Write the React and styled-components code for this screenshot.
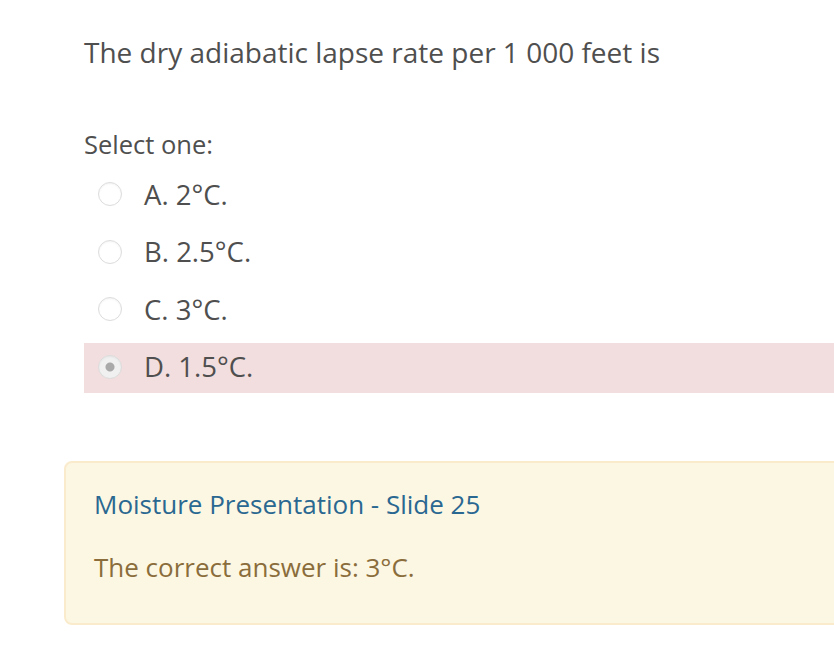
import styled, { createGlobalStyle } from "styled-components";

const GlobalStyle = createGlobalStyle`
  html, body {
    margin: 0;
    padding: 0;
    background: #fff;
    overflow: hidden;
  }
  body {
    font-family: "Open Sans", "Noto Sans", sans-serif;
    color: #4f4f4f;
  }
`;

const options = [
  { letter: "A", text: "2°C." },
  { letter: "B", text: "2.5°C." },
  { letter: "C", text: "3°C." },
  { letter: "D", text: "1.5°C.", checked: true, incorrect: true },
];

export default function App() {
  return (
    <>
      <GlobalStyle />
      <Page>
        <QuestionText>The dry adiabatic lapse rate per 1 000 feet is</QuestionText>
        <Prompt>Select one:</Prompt>
        <Answers>
          {options.map((o) => (
            <AnswerRow key={o.letter} $incorrect={o.incorrect}>
              <Radio $checked={o.checked} />
              <AnswerLabel>
                {o.letter}. {o.text}
              </AnswerLabel>
            </AnswerRow>
          ))}
        </Answers>
        <Feedback>
          <FeedbackLink>Moisture Presentation - Slide 25</FeedbackLink>
          <RightAnswer>The correct answer is: 3°C.</RightAnswer>
        </Feedback>
      </Page>
    </>
  );
}

const Page = styled.div`
  width: 900px;
  padding: 30px 0 0 84px;
`;

const QuestionText = styled.div`
  font-size: 28px;
  line-height: 44px;
  margin: 0 0 54px 0;
`;

const Prompt = styled.div`
  font-size: 25.5px;
  line-height: 32px;
  margin-bottom: 10px;
`;

const Answers = styled.div`
  display: flex;
  flex-direction: column;
  gap: 7.5px;
  margin-top: 1px;
`;

const AnswerRow = styled.div`
  display: flex;
  align-items: center;
  height: 50px;
  padding-left: 14px;
  padding-bottom: 2px;
  box-sizing: border-box;
  background: ${(p) => (p.$incorrect ? "#f2dede" : "transparent")};
`;

const Radio = styled.span`
  width: 22px;
  height: 22px;
  border-radius: 50%;
  border: 1px solid #dcdcdc;
  background: ${(p) =>
    p.$checked
      ? "radial-gradient(circle, #a9a9a9 0 4px, #f0f0f0 5px)"
      : "#fff"};
  box-shadow: inset 0 1px 2px rgba(0, 0, 0, 0.05);
  flex-shrink: 0;
`;

const AnswerLabel = styled.span`
  font-size: 27.5px;
  margin-left: 22px;
`;

const Feedback = styled.div`
  margin: 68px 0 0 -20px;
  padding: 23px 28px 38px 28px;
  background: #fcf7e3;
  border: 2px solid #faebcc;
  border-radius: 8px;
`;

const FeedbackLink = styled.a`
  display: block;
  color: #2a6891;
  font-size: 26px;
  line-height: 36px;
  margin-bottom: 27px;
`;

const RightAnswer = styled.div`
  color: #8a6d3b;
  font-size: 26px;
  line-height: 36px;
`;
